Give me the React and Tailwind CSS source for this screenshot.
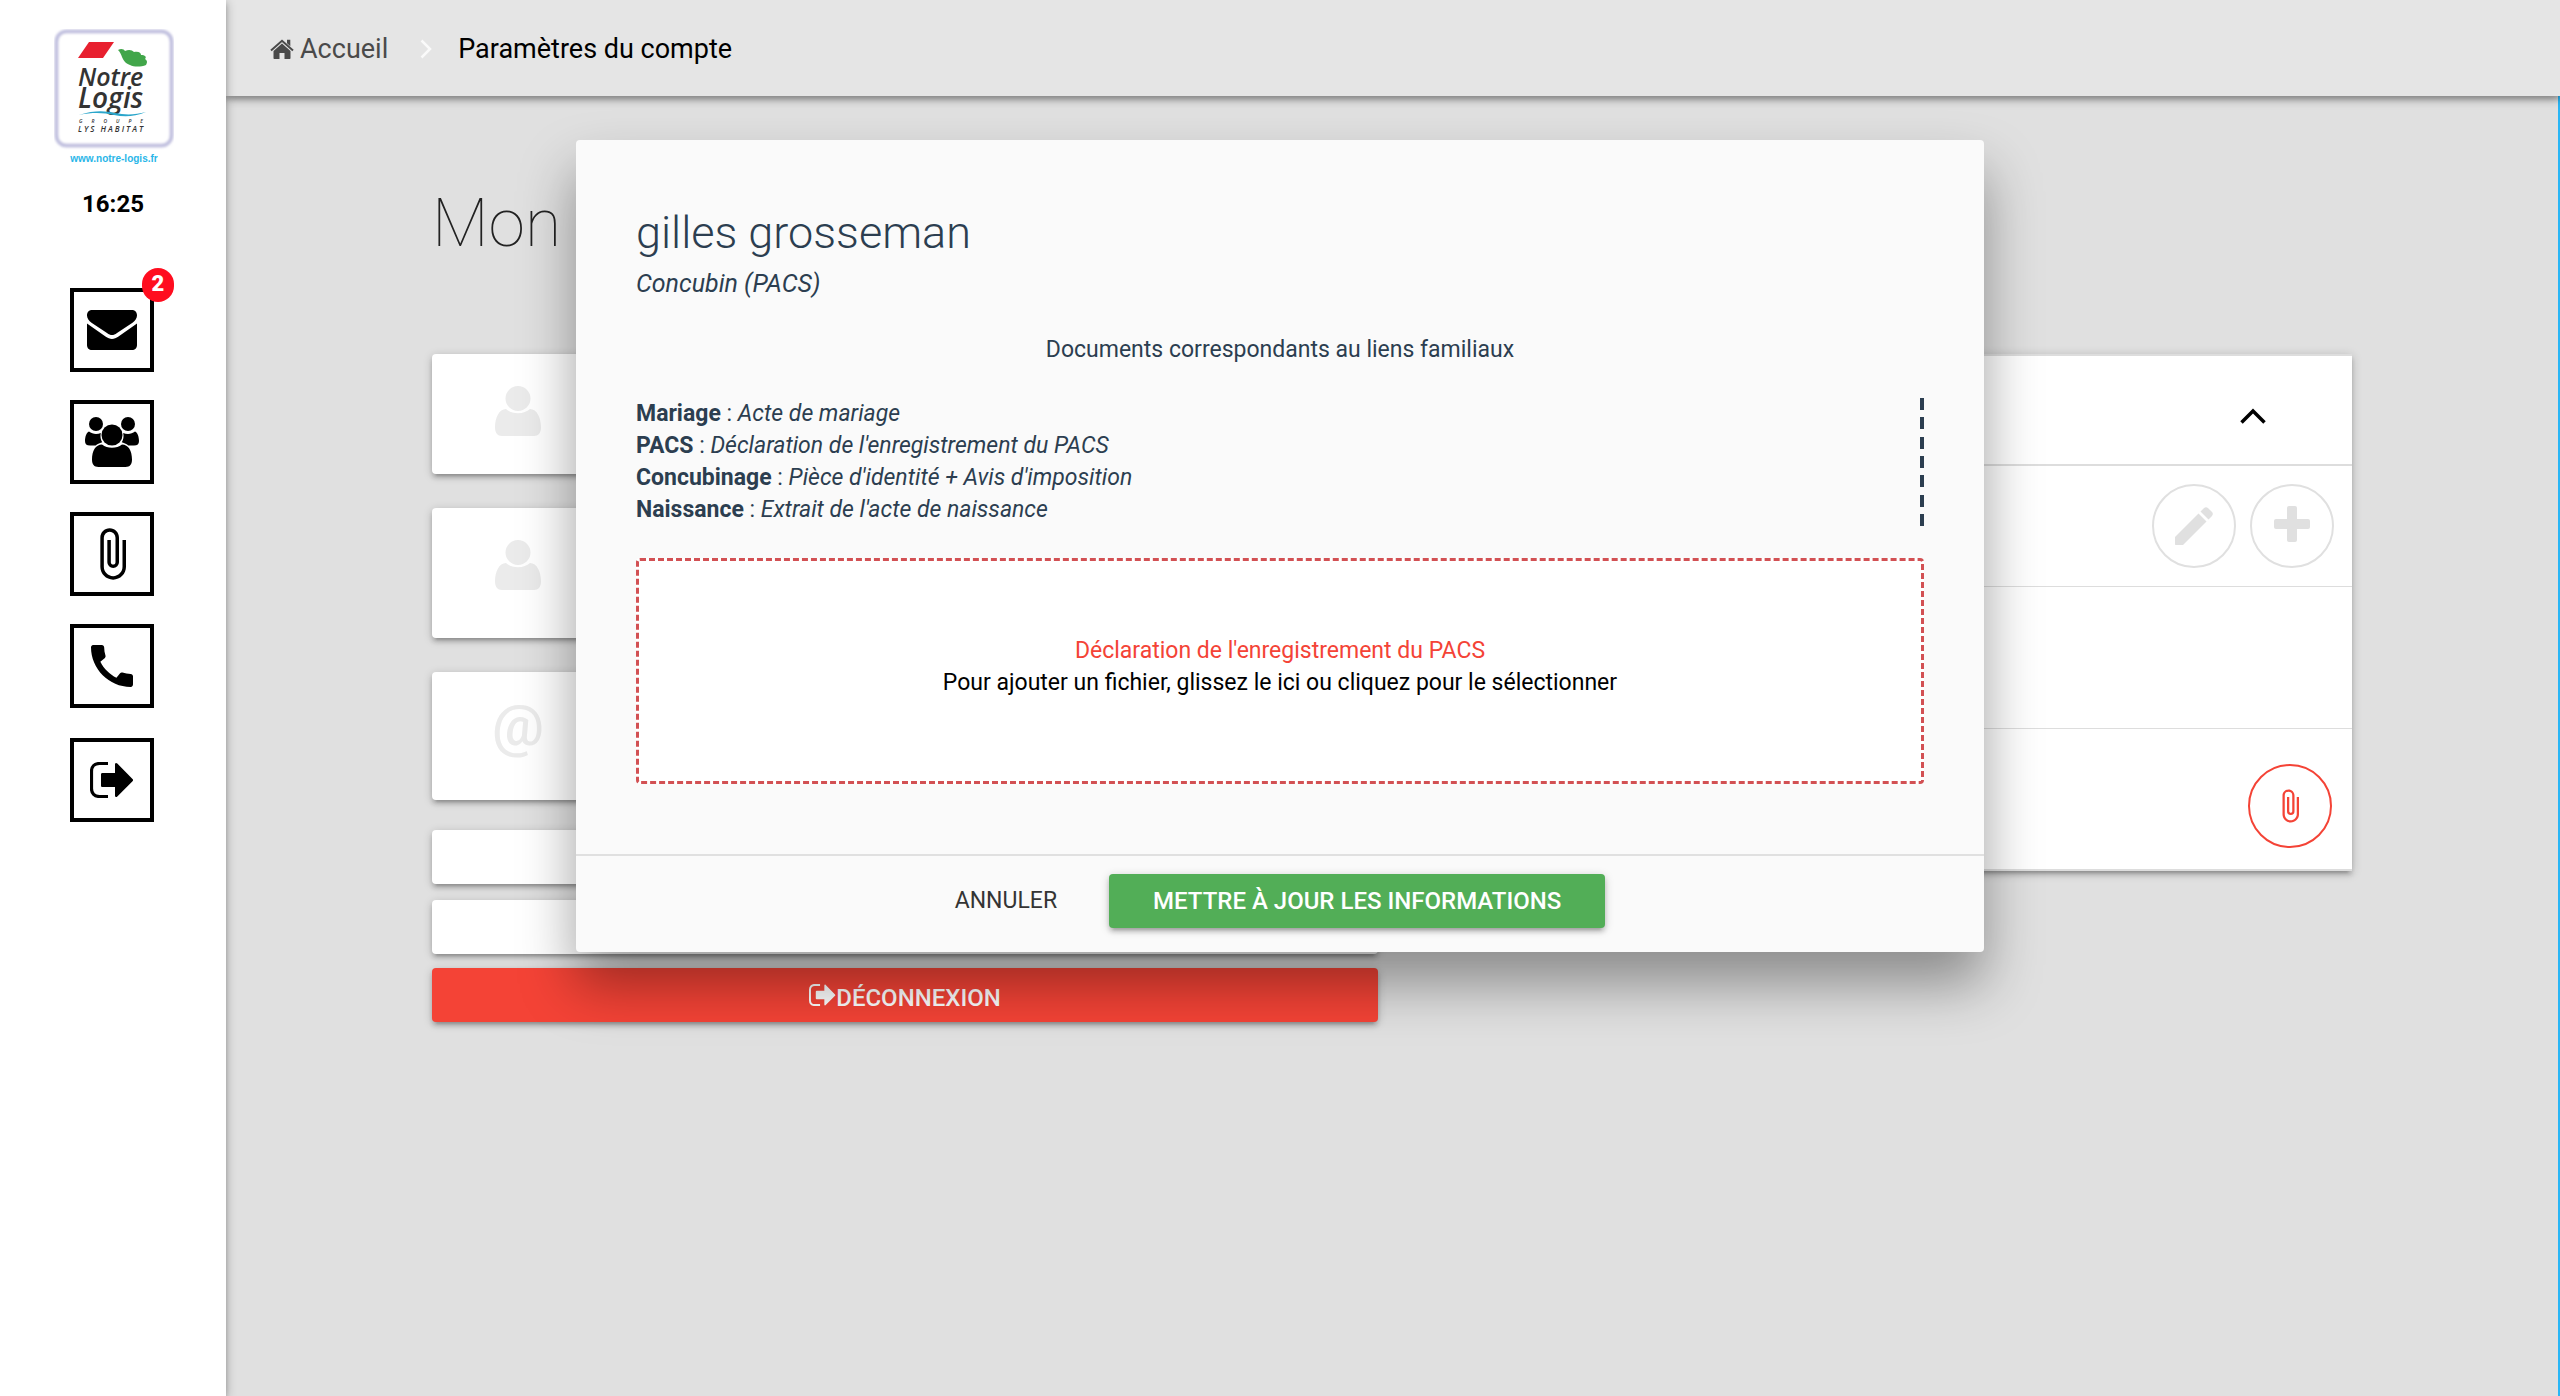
import React, { useState } from "react";
import { MdAttachFile, MdCall } from "react-icons/md";

const UserIcon = ({ className }) => (
  <svg viewBox="0 0 46 50" className={className} fill="currentColor" aria-hidden="true">
    <circle cx="23" cy="12.5" r="12.5" />
    <path d="M11 23c3 2.600 7 4.300 12 4.300S32 25.600 35 23c7 0 11 9 11 18.500 0 5-2.500 8.500-7 8.500H7c-4.500 0-7-3.500-7-8.500C0 32 4 23 11 23z" />
  </svg>
);

const UsersIcon = () => (
  <svg viewBox="0 0 54 50" className="w-[54px] h-[50px]" fill="currentColor" aria-hidden="true">
    <circle cx="11" cy="7" r="7" />
    <circle cx="43" cy="7" r="7" />
    <path d="M4 14.500c2 1.600 4.500 2.500 7 2.500 1.800 0 3.300-.4 4.800-1.100-.8 3.600-.2 6.600 1.400 9.300-3 .8-5 1.800-6.500 3.300H5c-3.500 0-5-1.500-5-4.500 0-4 1.500-9 4-9.500z" />
    <path d="M50 14.500c-2 1.600-4.500 2.500-7 2.500-1.800 0-3.300-.4-4.800-1.100.8 3.600.2 6.600-1.400 9.300 3 .8 5 1.800 6.500 3.300H49c3.500 0 5-1.500 5-4.500 0-4-1.500-9-4-9.500z" />
    <circle cx="27" cy="18" r="10.500" />
    <path d="M17 27.500c3 2.200 6 3.200 10 3.200s7-1 10-3.200c6.500 0 10 6.500 10 15 0 4.800-2 7.500-6.500 7.500h-27C9 50 7 47.300 7 42.500c0-8.500 3.500-15 10-15z" />
  </svg>
);

const MailIcon = () => (
  <svg viewBox="0 0 50 40" className="w-[50px] h-10" fill="currentColor" aria-hidden="true">
    <path d="M5 0h40c3 0 5 2.200 5 5.500 0 3-2 5.200-4.500 7.200L30 23c-3.600 2.700-6.400 2.700-10 0L4.500 12.700C2 10.700 0 8.500 0 5.500 0 2.200 2 0 5 0z" />
    <path d="M0 13.500l18.500 13c4.500 3.200 8.500 3.200 13 0L50 13.500V35c0 3-2 5-5 5H5c-3 0-5-2-5-5z" />
  </svg>
);

const ExitIcon = ({ className }) => (
  <svg viewBox="0 0 44 36" className={className} fill="currentColor" aria-hidden="true">
    <path d="M18 1.500H9.500c-5 0-8 3-8 8v17c0 5 3 8 8 8H18" fill="none" stroke="currentColor" strokeWidth="3.200" />
    <path d="M12.500 11H25V2.500c0-1.500 1.200-2 2.300-1L42.500 17c.8.700.8 1.500 0 2.200L27.300 34.500c-1.100 1-2.300.5-2.300-1V25H12.500c-1 0-1.500-.5-1.500-1.500v-11c0-1 .5-1.500 1.500-1.500z" />
  </svg>
);

const HomeIcon = () => (
  <svg viewBox="0 0 24 20" className="w-6 h-5" fill="currentColor" aria-hidden="true">
    <path d="M1 11.500L12 1.800l11 9.700" fill="none" stroke="currentColor" strokeWidth="2" />
    <path d="M17 .8h3.300v6.400L17 4.300z" />
    <path d="M12 4.500l8.500 7.500v7c0 .6-.4 1-1 1h-5v-6h-5v6h-5c-.6 0-1-.4-1-1v-7z" />
  </svg>
);

const PencilIcon = () => (
  <svg viewBox="0 0 38 38" className="size-[38px]" fill="currentColor" aria-hidden="true">
    <path d="M0 30L23.500 6.500l8 8L8 38H1c-.6 0-1-.4-1-1z" />
    <path d="M25.500 4.500l3.300-3.300c1.400-1.400 3-1.400 4.400 0l3.600 3.600c1.400 1.400 1.400 3 0 4.400l-3.300 3.300z" />
  </svg>
);

const PlusIcon = () => (
  <svg viewBox="0 0 36 36" className="size-9" fill="currentColor" aria-hidden="true">
    <rect x="13" width="10" height="36" rx="2" />
    <rect y="13" width="36" height="10" rx="2" />
  </svg>
);

const Logo = () => (
  <svg viewBox="0 0 120 140" className="w-[120px] h-[140px]" role="img" aria-label="Notre Logis">
    <defs>
      <filter id="soft" x="-10%" y="-10%" width="120%" height="120%">
        <feGaussianBlur stdDeviation="1" />
      </filter>
    </defs>
    <rect x="2.500" y="2.500" width="115" height="114" rx="10" fill="#fff" stroke="#c3c2e0" strokeWidth="4" filter="url(#soft)" />
    <path d="M35 13h25L49 29H24z" fill="#e8202f" />
    <path d="M64 21c3-2 6-1 7 1 4-2 7-1 9 1 5-1 7 1 7 3 4 0 6 2 4 4 3 2 2 4 1 6-5 2-12 2-16 0-5-2-6-4-8-8-1-3-2-5-4-7z" fill="#41a64a" />
    <g fill="#333" fontFamily="'Open Sans', sans-serif" fontStyle="italic">
      <text x="24" y="57" fontSize="25" fontWeight="600">Notre</text>
      <text x="24" y="79" fontSize="28" fontWeight="600">Logis</text>
      <text x="25" y="94" fontSize="5" fontWeight="600" letterSpacing="9">GROUPE</text>
      <text x="24" y="103" fontSize="8" fontWeight="600" letterSpacing="2">LYS HABITAT</text>
    </g>
    <path d="M25 86c16-5 26-4 36-2s20 2 31-1c-12 5-22 5-32 3s-20-3-35 0z" fill="#2ba6cb" />
    <text x="60" y="133" fontSize="10" fontWeight="bold" fill="#29b6e8" textAnchor="middle" fontFamily="'Liberation Sans', sans-serif">
      www.notre-logis.fr
    </text>
  </svg>
);

const navItems = [
  { label: "Messages", icon: <MailIcon />, badge: 2 },
  { label: "Famille", icon: <UsersIcon /> },
  { label: "Documents", icon: <MdAttachFile className="size-14" /> },
  { label: "Contact", icon: <MdCall className="size-14" /> },
  { label: "Déconnexion", icon: <ExitIcon className="w-11 h-9" /> },
];

const documents = [
  { link: "Mariage", file: "Acte de mariage" },
  { link: "PACS", file: "Déclaration de l'enregistrement du PACS" },
  { link: "Concubinage", file: "Pièce d'identité + Avis d'imposition" },
  { link: "Naissance", file: "Extrait de l'acte de naissance" },
];

const cardShadow =
  "shadow-[0_4px_4px_rgba(0,0,0,0.14),0_6px_2px_-4px_rgba(0,0,0,0.12),0_2px_10px_rgba(0,0,0,0.2)]";

const Sidebar = () => (
  <aside className="relative z-20 flex w-[226px] shrink-0 flex-col items-center bg-white pt-[29px] shadow-[0_4px_4px_rgba(0,0,0,0.14),0_2px_10px_rgba(0,0,0,0.3)]">
    <div className="pl-0.5">
      <Logo />
    </div>
    <time className="mt-[19px] text-2xl font-bold leading-8 text-black">16:25</time>
    <nav className="mt-[68px] flex flex-col gap-7 pr-0.5">
      {navItems.map((item) => (
        <a
          key={item.label}
          href="#"
          aria-label={item.label}
          className="relative flex size-[84px] items-center justify-center border-4 border-black text-black last:mt-0.5"
        >
          {item.icon}
          {item.badge && (
            <span className="absolute -right-6 -top-6 flex h-[34px] w-8 items-center justify-center rounded-2xl bg-[#ff0d1f] pb-1 text-[22px] font-black text-white">
              {item.badge}
            </span>
          )}
        </a>
      ))}
    </nav>
  </aside>
);

const Card = ({ className, children }) => (
  <div className={`rounded-sm bg-white px-[63px] py-8 text-[#ebebeb] ${cardShadow} ${className}`}>{children}</div>
);

const roundButton = "flex size-[84px] items-center justify-center rounded-full border-2";

const FamilyPanel = () => (
  <section className={`self-start border-y-2 border-[#ddd] bg-white ${cardShadow}`}>
    <div className="flex h-[110px] items-center justify-end border-b-2 border-[#ddd] pr-[86px] pt-3">
      <button aria-label="Replier" className="text-black">
        <svg viewBox="0 0 26 16" className="h-4 w-[26px]" fill="none" stroke="currentColor" strokeWidth="3.500" aria-hidden="true">
          <path d="M1.500 14.500L13 3l11.500 11.500" />
        </svg>
      </button>
    </div>
    <div className="flex h-[121px] items-center justify-end gap-3.5 border-b border-[#ddd] pr-[18px]">
      <button aria-label="Modifier" className={`${roundButton} border-[#e0e0e0] text-[#e0e0e0]`}>
        <PencilIcon />
      </button>
      <button aria-label="Ajouter" className={`${roundButton} border-[#e0e0e0] pb-1 text-[#e0e0e0]`}>
        <PlusIcon />
      </button>
    </div>
    <div className="h-[142px] border-b border-[#ddd]" />
    <div className="flex h-[140px] items-center justify-end pr-5 pt-3.5">
      <button aria-label="Joindre un document" className={`${roundButton} border-[#f44336] text-[#f44336]`}>
        <MdAttachFile className="size-9" />
      </button>
    </div>
  </section>
);

const FamilyModal = ({ onClose }) => {
  const [file, setFile] = useState(null);

  return (
    <div
      role="dialog"
      aria-label="gilles grosseman"
      className="absolute inset-x-0 top-[140px] z-30 mx-auto w-[55%] rounded-sm bg-[#fafafa] text-[#2c3e50] shadow-[0_32px_56px_rgba(0,0,0,0.38)]"
    >
      <div className="px-[60px] pb-[70px] pt-[60px]">
        <h4 className="text-[45px] font-light leading-[66px]">gilles grosseman</h4>
        <p className="text-[25px] italic leading-9">Concubin (PACS)</p>
        <p className="mt-8 text-center text-[23px] leading-8">Documents correspondants au liens familiaux</p>
        <div className="mt-8 flex justify-between">
          <ul className="text-[23px] leading-8">
            {documents.map((doc) => (
              <li key={doc.link}>
                <b>{doc.link}</b> : <i>{doc.file}</i>
              </li>
            ))}
          </ul>
          <div className="flex w-1 flex-col justify-between">
            {documents.concat(documents.slice(1)).map((_, i) => (
              <span key={i} className="h-3 bg-[#2c3e50]" />
            ))}
          </div>
        </div>
        <label className="mt-8 flex h-[226px] cursor-pointer flex-col items-center justify-center rounded border-3 border-dashed border-[#d25053] bg-white pb-2 text-[23px] leading-8 text-black">
          <span className="text-[#f44336]">Déclaration de l'enregistrement du PACS</span>
          <span>{file || "Pour ajouter un fichier, glissez le ici ou cliquez pour le sélectionner"}</span>
          <input type="file" className="sr-only" onChange={(e) => setFile(e.target.files[0]?.name)} />
        </label>
      </div>
      <div className="flex h-[98px] items-center justify-center gap-2 border-t-2 border-[#e0e0e0] pb-1.5 pr-11">
        <button onClick={onClose} className="h-[54px] px-11 text-[23px] text-[#343434]">
          ANNULER
        </button>
        <button className={`h-[54px] rounded-sm bg-[#52ae57] px-11 text-2xl font-medium text-white ${cardShadow}`}>
          METTRE À JOUR LES INFORMATIONS
        </button>
      </div>
    </div>
  );
};

const App = () => {
  const [open, setOpen] = useState(true);

  return (
    <div className="relative flex min-h-screen overflow-hidden bg-[#e0e0e0] font-['Roboto',sans-serif]">
      <Sidebar />
      <div className="flex flex-1 flex-col">
        <header className="relative z-10 flex h-24 items-center bg-[#e5e5e5] pl-11 pt-0.5 text-[27px] shadow-[0_4px_4px_rgba(0,0,0,0.14),0_2px_10px_rgba(0,0,0,0.4)]">
          <a href="#" className="flex items-center gap-1.5 text-[#4a4a4a]">
            <HomeIcon />
            Accueil
          </a>
          <svg viewBox="0 0 12 20" className="ml-8 mr-[26px] h-5 w-3" fill="none" stroke="#fafafa" strokeWidth="2.500" aria-hidden="true">
            <path d="M1.500 1.500L10 10l-8.500 8.500" />
          </svg>
          <span className="text-black">Paramètres du compte</span>
        </header>
        <main className="flex-1 border-r-2 border-[#29b6f6] pl-[206px] pr-[206px] pt-[78px]">
          <h1 className="text-[66px] font-thin leading-[100px] text-[#222]">Mon</h1>
          <div className="mt-20 grid grid-cols-2 gap-7">
            <div className="flex flex-col">
              <Card className="h-[120px]">
                <UserIcon className="h-[50px] w-[46px]" />
              </Card>
              <Card className="mt-[34px] h-[130px]">
                <UserIcon className="h-[50px] w-[46px]" />
              </Card>
              <Card className="mt-[34px] h-32">
                <span className="flex w-[46px] justify-center text-[58px] font-medium leading-[42px]">@</span>
              </Card>
              <button aria-label="Modifier le mot de passe" className={`mt-[30px] h-[54px] rounded-sm bg-white ${cardShadow}`} />
              <button aria-label="Modifier les préférences" className={`mt-4 h-[54px] rounded-sm bg-white ${cardShadow}`} />
              <button className={`mt-3.5 flex h-[54px] items-center justify-center rounded-sm bg-[#f44336] pt-1.5 text-2xl font-medium text-white ${cardShadow}`}>
                <ExitIcon className="mb-1.5 h-[22px] w-[27px]" />
                DÉCONNEXION
              </button>
            </div>
            <FamilyPanel />
          </div>
        </main>
      </div>
      {open && <FamilyModal onClose={() => setOpen(false)} />}
    </div>
  );
};

export default App;
